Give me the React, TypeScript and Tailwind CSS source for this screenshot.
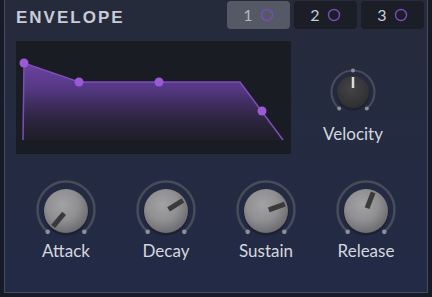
import React from 'react'

type KnobProps = {
  angle: number
  label: string
}

// point on a circle, angle measured clockwise from 12 o'clock
const polar = (cx: number, cy: number, r: number, deg: number) => {
  const a = (deg * Math.PI) / 180
  return { x: cx + r * Math.sin(a), y: cy - r * Math.cos(a) }
}

function GrayKnob({ angle, label }: KnobProps) {
  const c = 32
  const start = polar(c, c, 28.5, -140)
  const end = polar(c, c, 28.5, 140)
  const p1 = polar(c, c + 1, 3, angle)
  const p2 = polar(c, c + 1, 20, angle)
  const id = `knob-${label}`
  return (
    <div className="w-[100px] flex flex-col items-center">
      <svg width="64" height="64" viewBox="0 0 64 64">
        <defs>
          <radialGradient id={id} cx="42%" cy="36%" r="65%">
            <stop offset="0" stopColor="#a2a2a5" />
            <stop offset="0.55" stopColor="#909093" />
            <stop offset="1" stopColor="#6c6c70" />
          </radialGradient>
        </defs>
        <path
          d={`M ${start.x} ${start.y} A 28.5 28.5 0 1 1 ${end.x} ${end.y}`}
          fill="none"
          stroke="#474c5a"
          strokeWidth="2.5"
        />
        <circle cx={start.x} cy={start.y} r="2.3" fill="#8d9099" />
        <circle cx={end.x} cy={end.y} r="2.3" fill="#8d9099" />
        <circle cx={c} cy={c + 3} r="22.5" fill="#151824" opacity="0.55" />
        <circle cx={c} cy={c + 1} r="22" fill={`url(#${id})`} />
        <line x1={p1.x} y1={p1.y} x2={p2.x} y2={p2.y} stroke="#3a3a3b" strokeWidth="5" />
      </svg>
      <span className="text-[17px] leading-none text-[#d4d7df] font-['Lato','Liberation_Sans',sans-serif]">
        {label}
      </span>
    </div>
  )
}

function VelocityKnob() {
  const c = 24
  const start = polar(c, c, 21.5, -140)
  const end = polar(c, c, 21.5, 140)
  return (
    <svg width="48" height="48" viewBox="0 0 48 48">
      <defs>
        <radialGradient id="vel-body" cx="45%" cy="38%" r="65%">
          <stop offset="0" stopColor="#454547" />
          <stop offset="1" stopColor="#2e2e30" />
        </radialGradient>
      </defs>
      <path
        d={`M ${start.x} ${start.y} A 21.5 21.5 0 1 1 ${end.x} ${end.y}`}
        fill="none"
        stroke="#474c5a"
        strokeWidth="2.2"
      />
      <circle cx={start.x} cy={start.y} r="2" fill="#8d9099" />
      <circle cx={end.x} cy={end.y} r="2" fill="#8d9099" />
      <circle cx={c} cy={2.5} r="2" fill="#8d9099" />
      <circle cx={c} cy={c + 2} r="16.5" fill="#151824" opacity="0.5" />
      <circle cx={c} cy={c} r="16" fill="url(#vel-body)" />
      <line x1={c} y1={9} x2={c} y2={20} stroke="#dcdcdc" strokeWidth="2.5" />
    </svg>
  )
}

function EnvelopeGraph() {
  const dots = [
    [8, 22],
    [63, 41],
    [143, 41],
    [246, 70],
  ]
  return (
    <div className="w-[275px] h-[113px] bg-[#1a1c24]">
      <svg width="275" height="113" viewBox="0 0 275 113">
        <defs>
          <linearGradient id="env-fill" x1="0" y1="22" x2="0" y2="100" gradientUnits="userSpaceOnUse">
            <stop offset="0" stopColor="#7145a8" stopOpacity="0.95" />
            <stop offset="0.35" stopColor="#5a3a8c" stopOpacity="0.9" />
            <stop offset="1" stopColor="#2b2338" stopOpacity="0.25" />
          </linearGradient>
        </defs>
        <path d="M 8 22 L 63 41 L 224 41 L 267 99 L 7 99 Z" fill="url(#env-fill)" />
        <polyline
          points="7,99 8,22 63,41 224,41 267,99"
          fill="none"
          stroke="#7e4db8"
          strokeWidth="1.5"
        />
        {dots.map(([x, y]) => (
          <circle key={`${x}-${y}`} cx={x} cy={y} r="4.5" fill="#9a5ad8" />
        ))}
      </svg>
    </div>
  )
}

export default function App() {
  const tabs = ['1', '2', '3']
  return (
    <div className="w-[432px] h-[297px] bg-[#171a27] pl-[4px] overflow-hidden">
      <div className="w-[424px] h-[293px] border-l border-r border-b border-[#474c62] bg-gradient-to-b from-[#262b3b] to-[#232a46] flex flex-col">
        {/* header */}
        <div className="h-[30px] flex items-start">
          <h2 className="ml-[11px] mt-[9px] text-[17px] leading-none font-bold tracking-[2px] text-[#c9ccd8] font-['Liberation_Sans',sans-serif]">
            ENVELOPE
          </h2>
          <div className="ml-auto mr-[3px] mt-[1px] flex gap-[4px]">
            {tabs.map((t, i) => (
              <div
                key={t}
                className={`w-[63px] h-[28px] rounded-[4px] flex items-center justify-center gap-[7px] ${
                  i === 0 ? 'bg-[#555966]' : 'bg-[#1b1d27]'
                }`}
              >
                <span
                  className={`text-[16px] leading-none font-['Lato','Liberation_Sans',sans-serif] ${
                    i === 0 ? 'text-[#b3b6c0]' : 'text-[#c9ccd4]'
                  }`}
                >
                  {t}
                </span>
                <svg width="14" height="14" viewBox="0 0 14 14" className="shrink-0">
                  <circle cx="7" cy="7" r="5.5" fill="none" stroke="#7a4cb8" strokeWidth="1.4" />
                </svg>
              </div>
            ))}
          </div>
        </div>

        {/* graph + velocity */}
        <div className="mt-[11px] ml-[11px] flex">
          <EnvelopeGraph />
          <div className="ml-[38px] mt-[27px] flex flex-col items-center w-[48px]">
            <VelocityKnob />
            <span className="mt-[9px] text-[17px] leading-none text-[#d4d7df] font-['Lato','Liberation_Sans',sans-serif] whitespace-nowrap">
              Velocity
            </span>
          </div>
        </div>

        {/* ADSR knobs */}
        <div className="mt-[24px] ml-[11px] flex">
          <GrayKnob angle={-140} label="Attack" />
          <GrayKnob angle={58} label="Decay" />
          <GrayKnob angle={70} label="Sustain" />
          <GrayKnob angle={21} label="Release" />
        </div>
      </div>
    </div>
  )
}
